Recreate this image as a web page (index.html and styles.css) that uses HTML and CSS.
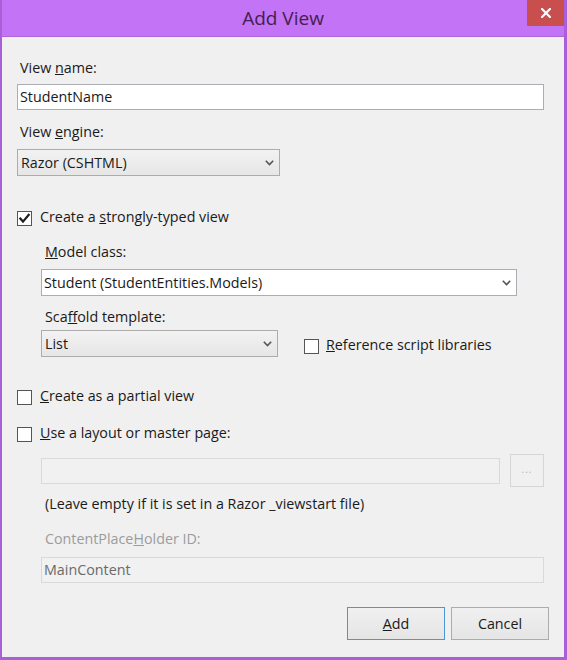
FILE: index.html
```html
<!DOCTYPE html>
<html lang="en">
<head>
<meta charset="utf-8">
<title>Add View</title>
<link rel="stylesheet" href="styles.css">
</head>
<body>
<div class="window">
  <header class="titlebar">
    <span class="title-spacer"></span>
    <h1 class="title">Add View</h1>
    <button class="close" aria-label="Close">
      <svg width="10" height="10" viewBox="0 0 10 10"><path d="M1 1 L9 9 M9 1 L1 9" stroke="#ffffff" stroke-width="2.2" stroke-linecap="square" fill="none"/></svg>
    </button>
  </header>
  <main class="content">
    <label class="label lbl-viewname">View <u>n</u>ame:</label>
    <div class="textbox tb-viewname">StudentName</div>

    <label class="label lbl-engine">View <u>e</u>ngine:</label>
    <div class="combo combo-engine">
      <span>Razor (CSHTML)</span>
      <svg class="chev" width="9" height="6" viewBox="0 0 9 6"><path d="M0.8 0.8 L4.5 4.6 L8.2 0.8" stroke="#555555" stroke-width="1.6" fill="none"/></svg>
    </div>

    <div class="check row-strong">
      <span class="box"><svg width="13" height="13" viewBox="0 0 13 13"><path d="M1.6 5.8 L5 9.6 L11.4 2" stroke="#1e1e1e" stroke-width="2.2" fill="none"/></svg></span>
      <span>Create a <u>s</u>trongly-typed view</span>
    </div>

    <section class="sub sub-model">
      <label class="label lbl-model"><u>M</u>odel class:</label>
      <div class="combo combo-model">
        <span>Student (StudentEntities.Models)</span>
        <svg class="chev" width="9" height="6" viewBox="0 0 9 6"><path d="M0.8 0.8 L4.5 4.6 L8.2 0.8" stroke="#555555" stroke-width="1.6" fill="none"/></svg>
      </div>
      <label class="label lbl-scaffold">Sca<u>f</u>fold template:</label>
      <div class="scaffold-row">
        <div class="combo combo-scaffold">
          <span>List</span>
          <svg class="chev" width="9" height="6" viewBox="0 0 9 6"><path d="M0.8 0.8 L4.5 4.6 L8.2 0.8" stroke="#555555" stroke-width="1.6" fill="none"/></svg>
        </div>
        <div class="check row-reference">
          <span class="box"></span>
          <span><u>R</u>eference script libraries</span>
        </div>
      </div>
    </section>

    <div class="check row-partial">
      <span class="box"></span>
      <span><u>C</u>reate as a partial view</span>
    </div>
    <div class="check row-layout">
      <span class="box"></span>
      <span><u>U</u>se a layout or master page:</span>
    </div>

    <section class="sub sub-master">
      <div class="master-row">
        <div class="textbox disabled tb-master"></div>
        <button class="browse" disabled>...</button>
      </div>
      <p class="note">(Leave empty if it is set in a Razor _viewstart file)</p>
      <label class="label lbl-cph disabled-text">ContentPlace<u>H</u>older ID:</label>
      <div class="textbox disabled tb-cph">MainContent</div>
    </section>

    <div class="buttons">
      <button class="btn btn-default"><u>A</u>dd</button>
      <button class="btn">Cancel</button>
    </div>
  </main>
</div>
</body>
</html>
```

FILE: styles.css
```css
* {
  box-sizing: border-box;
}

html, body {
  margin: 0;
  padding: 0;
}

body {
  width: 567px;
  height: 660px;
  overflow: hidden;
  background: #f0f0f0;
  font-family: "Open Sans", "Noto Sans", sans-serif;
  font-size: 14.3px;
  color: #1a1a1a;
}

.window {
  width: 567px;
  height: 660px;
  display: flex;
  flex-direction: column;
  background: #f0f0f0;
  border-style: solid;
  border-color: #a85fd8;
  border-width: 0 3px 3px 2px;
}

.titlebar {
  flex: none;
  height: 37px;
  display: grid;
  grid-template-columns: 37px 1fr 37px;
  align-items: start;
  background: #c373f5;
  border-bottom: 1px solid #ad64dd;
}

.title {
  margin: 0;
  padding-top: 1px;
  text-align: center;
  font-size: 19px;
  font-weight: 400;
  line-height: 35px;
  color: #43204f;
}

.close {
  width: 37px;
  height: 26px;
  padding: 0;
  border: 0;
  background: #c94f4f;
  display: flex;
  align-items: center;
  justify-content: center;
}

.content {
  flex: 1;
  display: flex;
  flex-direction: column;
  padding: 0 20px 0 15px;
}

.label {
  display: block;
  line-height: 20px;
  padding-left: 3px;
}

.textbox {
  height: 26px;
  border: 1px solid #abadb3;
  background: #ffffff;
  padding-left: 2px;
  line-height: 24px;
  white-space: nowrap;
}

.textbox.disabled {
  background: #f1f1f1;
  border-color: #d9d9d9;
  color: #6a6a6a;
}

.combo {
  height: 27px;
  display: flex;
  align-items: center;
  justify-content: space-between;
  border: 1px solid #acacac;
  background: linear-gradient(#f2f2f2, #e6e6e6);
  padding: 0 5px 0 3px;
  line-height: 25px;
  white-space: nowrap;
}

.chev {
  flex: none;
}

.check {
  display: flex;
  align-items: flex-start;
  gap: 8px;
  line-height: 20px;
  white-space: nowrap;
}

.box {
  flex: none;
  width: 15px;
  height: 15px;
  margin-top: 4px;
  border: 1px solid #555555;
  background: #ffffff;
  display: flex;
}

/* vertical rhythm */
.lbl-viewname { margin-top: 21px; }
.tb-viewname { margin-top: 6px; }
.lbl-engine { margin-top: 12px; }
.combo-engine { margin-top: 7px; width: 263px; }
.row-strong { margin-top: 31px; }

.sub {
  display: flex;
  flex-direction: column;
  padding-left: 24px;
}

.sub .label {
  padding-left: 4px;
}

.lbl-model { margin-top: 15px; }
.combo-model {
  margin-top: 7px;
  width: 476px;
  background: #ffffff;
  border-color: #abadb3;
  padding-left: 2px;
}
.lbl-scaffold { margin-top: 11px; }

.scaffold-row {
  margin-top: 3px;
  display: flex;
  align-items: flex-start;
}

.combo-scaffold { width: 237px; }

.row-reference {
  margin-top: 5px;
  margin-left: 26px;
  gap: 7px;
}

.row-partial { margin-top: 29px; }
.row-layout { margin-top: 17px; }

.master-row {
  margin-top: 11px;
  height: 33px;
  display: flex;
  align-items: center;
  gap: 10px;
}

.tb-master { flex: 1; }

.browse {
  flex: none;
  width: 34px;
  height: 33px;
  padding: 0 0 4px;
  border: 1px solid #d6d6d6;
  background: #f0f0f0;
  color: #b4b4b4;
  font-family: inherit;
  font-size: 10px;
  letter-spacing: 1px;
}

.note {
  margin: 7px 0 0;
  padding-left: 4px;
  line-height: 20px;
}

.disabled-text {
  color: #9c9c9c;
}

.lbl-cph { margin-top: 15px; }
.tb-cph { margin-top: 8px; }

.buttons {
  margin-top: 24px;
  margin-right: -5px;
  display: flex;
  justify-content: flex-end;
  gap: 6px;
}

.btn {
  width: 98px;
  height: 33px;
  padding: 0;
  border: 1px solid #acacac;
  background: linear-gradient(#f0f0f0, #e5e5e5);
  font-family: inherit;
  font-size: 14.3px;
  color: #1a1a1a;
}

.btn-default {
  border-color: #4f95d6;
}
```
